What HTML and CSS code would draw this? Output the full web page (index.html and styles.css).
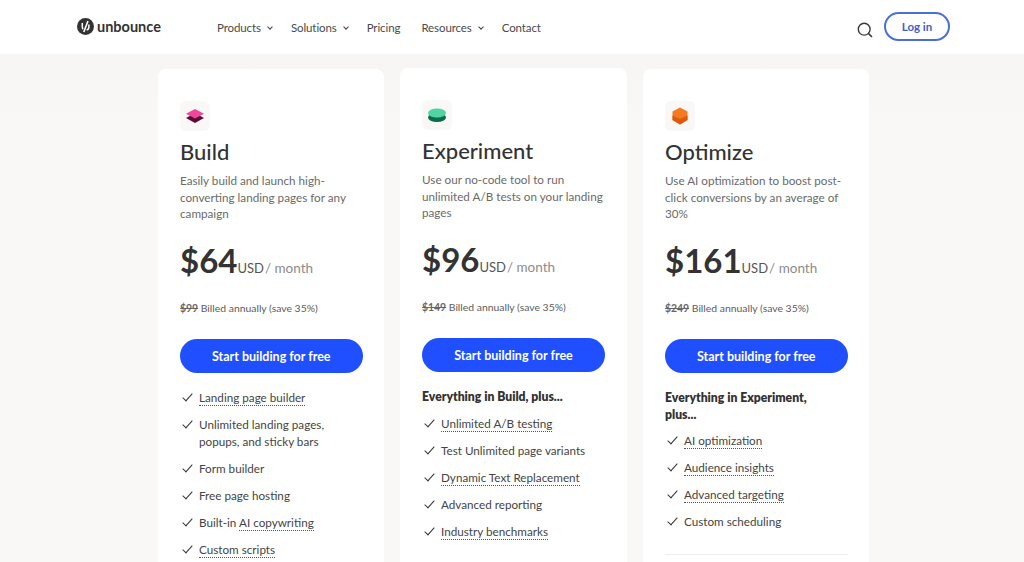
FILE: index.html
```html
<!DOCTYPE html>
<html lang="en">
<head>
  <meta charset="UTF-8">
  <title>Unbounce Pricing</title>
  <link rel="stylesheet" href="styles.css">
</head>
<body>

  <!-- Top navigation -->
  <header class="topbar">
    <a class="logo" href="#">
      <svg class="logo-mark" viewBox="0 0 18 18" width="17" height="17">
        <circle cx="9" cy="9" r="9" fill="#333"/>
        <path d="M11.6 3.2 L7.2 14.8" stroke="#fff" stroke-width="1.7" fill="none"/>
        <path d="M5.6 5.4 V9.4 C5.6 10.4 5.9 11.2 6.5 11.8" stroke="#fff" stroke-width="1.6" fill="none"/>
        <path d="M12.6 6.8 V9.4 C12.6 11 11.6 12.2 10.2 12.6" stroke="#fff" stroke-width="1.6" fill="none"/>
      </svg>
      <span>unbounce</span>
    </a>
    <nav class="nav">
      <a class="has-caret" href="#">Products <i class="caret"></i></a>
      <a class="has-caret" href="#">Solutions <i class="caret"></i></a>
      <a href="#">Pricing</a>
      <a class="has-caret" href="#">Resources <i class="caret"></i></a>
      <a href="#">Contact</a>
    </nav>
    <div class="topbar-right">
      <svg class="search" viewBox="0 0 16 16" width="16" height="16">
        <circle cx="7.2" cy="7.2" r="5.9" stroke="#3a3a3a" stroke-width="1.4" fill="none"/>
        <path d="M11.6 11.6 L15 15" stroke="#3a3a3a" stroke-width="1.6" fill="none"/>
      </svg>
      <a class="login" href="#">Log in</a>
    </div>
  </header>

  <main class="plans">

    <section class="card">
      <div class="plan-icon">
        <svg viewBox="0 0 20 16" width="20" height="16">
          <path d="M10 5 L19 10 L10 15 L1 10 Z" fill="#5c0a36"/>
          <path d="M10 1 L19 5.8 L10 10.6 L1 5.8 Z" fill="#f0479b"/>
        </svg>
      </div>
      <h2>Build</h2>
      <p class="desc">Easily build and launch high-converting landing pages for any campaign</p>
      <div class="price"><strong>$64</strong><span class="usd">USD</span><span class="per">/ month</span></div>
      <p class="billed"><s>$99</s> Billed annually (save 35%)</p>
      <a class="cta" href="#">Start building for free</a>
      <ul class="features">
        <li><span class="dotted">Landing page builder</span></li>
        <li>Unlimited landing pages, popups, and sticky bars</li>
        <li>Form builder</li>
        <li>Free page hosting</li>
        <li>Built-in <span class="dotted">AI copywriting</span></li>
        <li><span class="dotted">Custom scripts</span></li>
      </ul>
    </section>

    <section class="card card-mid">
      <div class="plan-icon">
        <svg viewBox="0 0 20 16" width="20" height="16">
          <ellipse cx="10" cy="10.5" rx="9" ry="4.5" fill="#0b6b4c"/>
          <ellipse cx="10" cy="6" rx="9" ry="4.6" fill="#4fd6a0"/>
        </svg>
      </div>
      <h2>Experiment</h2>
      <p class="desc">Use our no-code tool to run unlimited A/B tests on your landing pages</p>
      <div class="price"><strong>$96</strong><span class="usd">USD</span><span class="per">/ month</span></div>
      <p class="billed"><s>$149</s> Billed annually (save 35%)</p>
      <a class="cta" href="#">Start building for free</a>
      <p class="plus">Everything in Build, plus...</p>
      <ul class="features indented">
        <li><span class="dotted">Unlimited A/B testing</span></li>
        <li>Test Unlimited page variants</li>
        <li><span class="dotted">Dynamic Text Replacement</span></li>
        <li>Advanced reporting</li>
        <li><span class="dotted">Industry benchmarks</span></li>
      </ul>
    </section>

    <section class="card">
      <div class="plan-icon">
        <svg viewBox="0 0 16 18" width="16" height="18">
          <path d="M8 0.5 L15.5 4.5 V13 L8 17.5 L0.5 13 V4.5 Z" fill="#f47a1f"/>
          <path d="M0.5 8.5 L8 12 L15.5 8.5 V13 L8 17.5 L0.5 13 Z" fill="#dd5a0c"/>
        </svg>
      </div>
      <h2>Optimize</h2>
      <p class="desc">Use AI optimization to boost post-click conversions by an average of 30%</p>
      <div class="price"><strong>$161</strong><span class="usd">USD</span><span class="per">/ month</span></div>
      <p class="billed"><s>$249</s> Billed annually (save 35%)</p>
      <a class="cta" href="#">Start building for free</a>
      <p class="plus">Everything in Experiment, plus...</p>
      <ul class="features indented">
        <li><span class="dotted">AI optimization</span></li>
        <li><span class="dotted">Audience insights</span></li>
        <li><span class="dotted">Advanced targeting</span></li>
        <li>Custom scheduling</li>
      </ul>
      <hr class="rule">
    </section>

  </main>

</body>
</html>
```

FILE: styles.css
```css
html, body {
  height: 562px;
  overflow: hidden;
}

body {
  margin: 0;
  font-family: 'Lato', 'Open Sans', sans-serif;
  color: #3a3a3a;
  background: linear-gradient(180deg, #ececec 0, #f6f5f4 50px, #faf8f7 120px);
}

a {
  color: inherit;
  text-decoration: none;
}

.topbar {
  height: 54px;
  background-color: #fff;
  display: flex;
  align-items: center;
  padding: 0 74px 0 77px;
}

.logo {
  display: flex;
  align-items: center;
  gap: 3px;
  width: 140px;
  margin-bottom: 1px;
  font-size: 14.5px;
  font-weight: 700;
  color: #333;
}

.logo-mark {
  flex: none;
}

.nav {
  display: flex;
  gap: 21px;
  font-size: 11.5px;
  letter-spacing: -0.1px;
  color: #4a4a4a;
}

.nav a {
  display: flex;
  align-items: center;
}

.nav .has-caret {
  gap: 7px;
  margin-right: -2px;
}

.caret {
  width: 3px;
  height: 3px;
  border-right: 1px solid #444;
  border-bottom: 1px solid #444;
  transform: rotate(45deg);
}

.topbar-right {
  margin-left: auto;
  display: flex;
  align-items: center;
  gap: 11px;
}

.search {
  margin-top: 5px;
}

.login {
  width: 62px;
  height: 25px;
  display: flex;
  align-items: center;
  justify-content: center;
  border: 2px solid #4a6fd8;
  border-radius: 15px;
  color: #3f5fc8;
  font-size: 11.5px;
  font-weight: 700;
  margin-bottom: 2px;
}

.plans {
  display: flex;
  gap: 16px;
  padding: 15px 0 0 157.5px;
}

.card {
  width: 226.5px;
  height: 520px;
  box-sizing: border-box;
  flex: none;
  background-color: #fff;
  border-radius: 8px;
  padding: 32px 21.5px 0 22.5px;
}

.card-mid {
  margin-top: -1px;
  padding-left: 22px;
}

.plan-icon {
  width: 30px;
  height: 30px;
  display: flex;
  align-items: center;
  justify-content: center;
  background-color: #faf8f6;
  border-radius: 6px;
}

h2 {
  margin: 7px 0 0;
  font-size: 22px;
  line-height: 28px;
  font-weight: 500;
  color: #333;
}

.desc {
  margin: 6px 0 0;
  height: 50px;
  font-size: 11.7px;
  line-height: 16.5px;
  color: #6a6a6a;
}

.price {
  margin-top: 17px;
  height: 42px;
  display: flex;
  align-items: baseline;
  white-space: nowrap;
}

.price strong {
  font-size: 33px;
  line-height: 42px;
  font-weight: 700;
  color: #333;
}

.usd {
  font-size: 13px;
  color: #555;
}

.per {
  font-size: 13.5px;
  color: #8c8c8c;
  margin-left: 1px;
}

.billed {
  margin: 20px 0 0;
  font-size: 10.4px;
  line-height: 14px;
  color: #5c5c5c;
}

.billed s {
  font-weight: 700;
  color: #666;
}

.cta {
  display: flex;
  align-items: center;
  justify-content: center;
  margin-top: 24px;
  height: 34px;
  background-color: #1f4fff;
  border-radius: 17px;
  color: #fff;
  font-size: 12.5px;
  font-weight: 700;
}

.plus {
  margin: 17px 0 0;
  max-width: 165px;
  font-size: 12.2px;
  line-height: 16.5px;
  font-weight: 800;
  color: #333;
}

.features {
  list-style: none;
  margin: 16px 0 0;
  padding: 0;
  font-size: 11.7px;
  line-height: 16.5px;
  color: #444;
}

.features.indented {
  margin-top: 9px;
}

.features li {
  position: relative;
  padding-left: 19px;
  margin-bottom: 10.6px;
}

/* check mark */
.features li::before {
  content: "";
  position: absolute;
  left: 5px;
  top: 2px;
  width: 4px;
  height: 9px;
  border-right: 1.5px solid #333;
  border-bottom: 1.5px solid #333;
  transform: rotate(42deg);
}

.dotted {
  border-bottom: 1px dotted #555;
  padding-bottom: 1px;
}

.rule {
  border: 0;
  border-top: 1px solid #f0eeec;
  margin: 24px 0 0;
}
```
